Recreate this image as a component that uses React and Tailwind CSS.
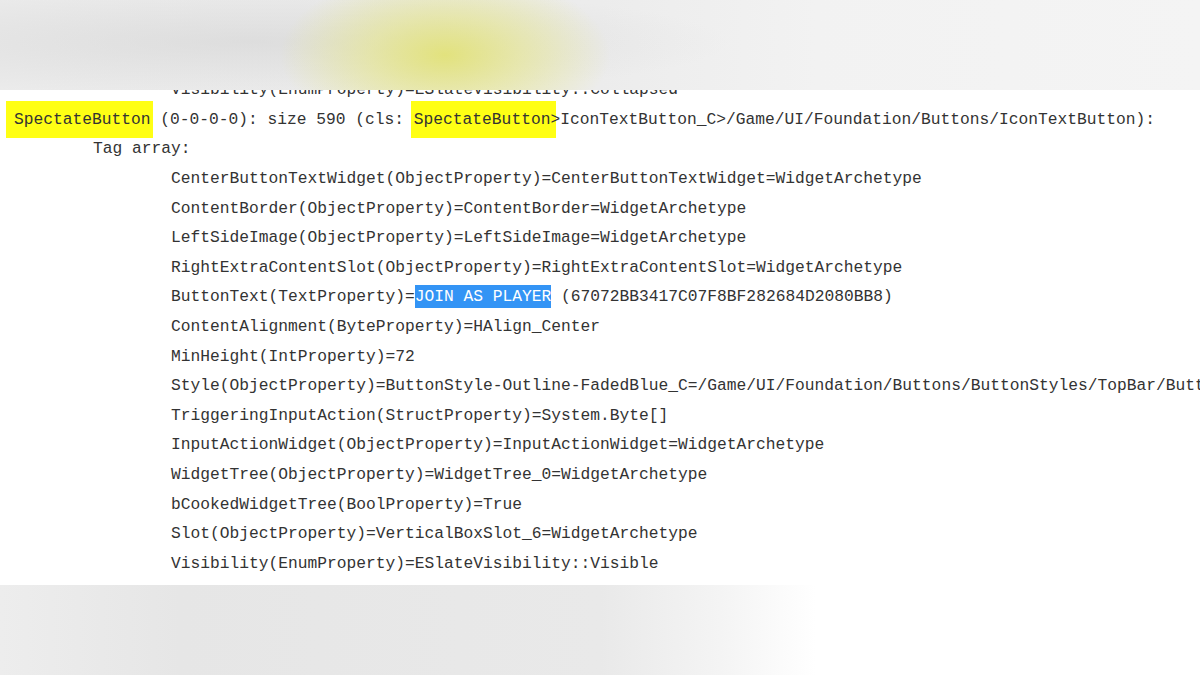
import React from "react";

const mono = "font-['Consolas','Liberation_Mono','DejaVu_Sans_Mono',monospace]";

const props = [
  "CenterButtonTextWidget(ObjectProperty)=CenterButtonTextWidget=WidgetArchetype",
  "ContentBorder(ObjectProperty)=ContentBorder=WidgetArchetype",
  "LeftSideImage(ObjectProperty)=LeftSideImage=WidgetArchetype",
  "RightExtraContentSlot(ObjectProperty)=RightExtraContentSlot=WidgetArchetype",
  null,
  "ContentAlignment(ByteProperty)=HAlign_Center",
  "MinHeight(IntProperty)=72",
  "Style(ObjectProperty)=ButtonStyle-Outline-FadedBlue_C=/Game/UI/Foundation/Buttons/ButtonStyles/TopBar/ButtonStyle-Outline-FadedBlue.ButtonStyle-Outline-FadedBlue_C",
  "TriggeringInputAction(StructProperty)=System.Byte[]",
  "InputActionWidget(ObjectProperty)=InputActionWidget=WidgetArchetype",
  "WidgetTree(ObjectProperty)=WidgetTree_0=WidgetArchetype",
  "bCookedWidgetTree(BoolProperty)=True",
  "Slot(ObjectProperty)=VerticalBoxSlot_6=WidgetArchetype",
  "Visibility(EnumProperty)=ESlateVisibility::Visible",
];

export default function App() {
  return (
    <div className="w-[1200px] h-[675px] overflow-hidden flex flex-col bg-white">
      <div className="h-[90px] shrink-0 bg-[radial-gradient(ellipse_165px_85px_at_445px_55px,rgba(226,226,120,0.95)_0%,rgba(230,230,135,0.6)_45%,rgba(238,238,170,0)_100%),radial-gradient(ellipse_480px_55px_at_250px_42px,rgba(212,212,212,0.6)_0%,rgba(212,212,212,0)_100%),linear-gradient(to_right,#ebebeb_0%,#ececec_50%,#f2f2f2_68%,#f4f4f4_100%)]" />
      <div
        className={`h-[495px] shrink-0 overflow-hidden bg-white pl-[14px] text-[16.25px] leading-[29.6px] text-[#333333] whitespace-nowrap ${mono}`}
      >
        <div className="mt-[-14.8px] pl-[157px]">
          Visibility(EnumProperty)=ESlateVisibility::Collapsed
        </div>
        <div>
          <span className="bg-[#ffff14] py-[9px] -ml-[8px] pl-[8px] pr-[2px] -mr-[2px]">
            SpectateButton
          </span>{" "}
          (0-0-0-0): size 590 (cls:{" "}
          <span className="bg-[#ffff14] py-[9px] -ml-[3px] pl-[3px] pr-[6px] -mr-[6px]">
            SpectateButton
          </span>
          &gt;IconTextButton_C&gt;/Game/UI/Foundation/Buttons/IconTextButton):
        </div>
        <div className="pl-[79px]">Tag array:</div>
        {props.map((p, i) =>
          p === null ? (
            <div key={i} className="pl-[157px]">
              ButtonText(TextProperty)=
              <span className="bg-[#3394f5] text-white py-[2px]">JOIN AS PLAYER</span>{" "}
              (67072BB3417C07F8BF282684D2080BB8)
            </div>
          ) : (
            <div key={i} className="pl-[157px]">
              {p}
            </div>
          )
        )}
      </div>
      <div className="flex-1 bg-[linear-gradient(to_right,#ededed_0%,#e6e6e6_15%,#e9e9e9_50%,#f4f4f4_60%,#ffffff_68%,#ffffff_100%)]" />
    </div>
  );
}
